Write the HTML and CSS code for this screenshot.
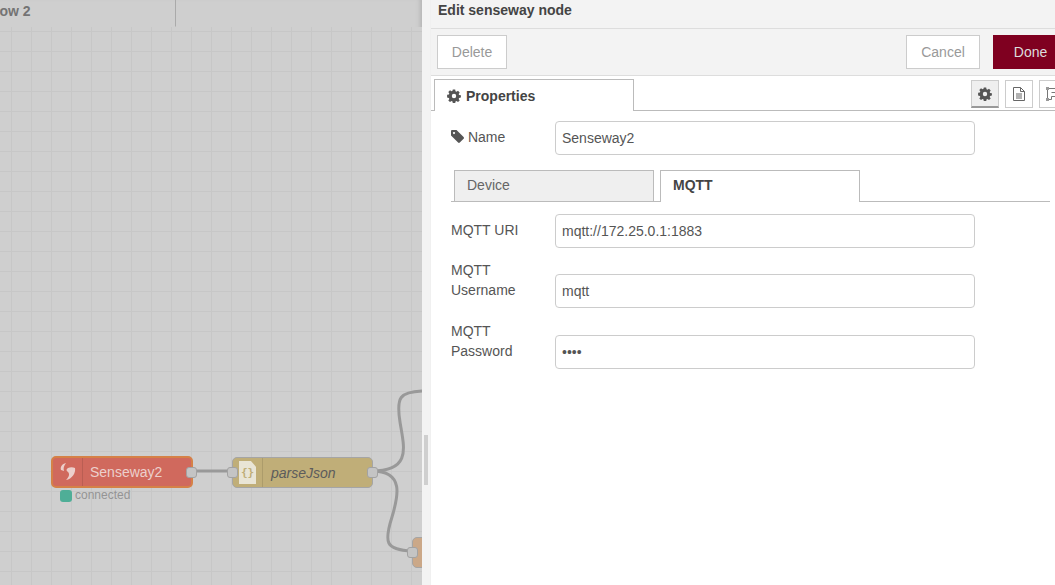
FILE: index.html
```html
<!DOCTYPE html>
<html lang="en">
<head>
<meta charset="utf-8">
<title>Edit senseway node</title>
<link rel="stylesheet" href="styles.css">
</head>
<body>
<div class="workspace">
  <div class="canvas-col">
    <div class="flow-tabs">
      <div class="flow-tab"><span class="flow-tab-label">Flow 2</span></div>
    </div>
    <div class="canvas">
      <svg class="wires" width="422" height="558" viewBox="0 0 422 558">
        <path d="M192 444 L232 444"/>
        <path d="M372 444 C412 444 404 420 400 395 C396 370 400 365 422 364"/>
        <path d="M372 444 C405 444 398 470 392 490 C384 515 385 523 412 524"/>
      </svg>
      <div class="node node-senseway">
        <span class="node-icon node-icon-red">
          <svg width="18" height="20" viewBox="0 0 18 20"><path d="M7 1 C3 2 1 5 2 8 L5 9 C4 6 5 4 7 1Z M16 6 C17 11 13 17 7 18 C10 15 11 12 9 10 C7 9 7 7 9 6 C11 5 14 5 16 6Z" fill="#eccfcb"/></svg>
        </span>
        <span class="node-label">Senseway2</span>
        <span class="port port-out"></span>
      </div>
      <div class="node-status"><span class="status-dot"></span>connected</div>
      <div class="node node-json">
        <span class="node-icon node-icon-json"><span class="json-page">{}</span></span>
        <span class="node-label">parseJson</span>
        <span class="port port-in"></span>
        <span class="port port-out"></span>
      </div>
      <div class="node node-orange"><span class="port port-in"></span></div>
    </div>
  </div>
  <div class="handle"><span class="handle-bar"></span></div>
  <div class="panel">
    <div class="panel-title">Edit senseway node</div>
    <div class="panel-actions">
      <button class="btn btn-delete">Delete</button>
      <div class="actions-right">
        <button class="btn btn-cancel">Cancel</button>
        <button class="btn btn-done">Done</button>
      </div>
    </div>
    <div class="panel-tabs">
      <div class="panel-tab">
        <svg class="gear" width="14" height="14" viewBox="0 0 14 14"><path fill-rule="evenodd" d="M5.8 0.5h2.4l.3 1.8 1 .4 1.5-1 1.7 1.7-1 1.5.4 1 1.8.3v2.4l-1.8.3-.4 1 1 1.5-1.7 1.7-1.5-1-1 .4-.3 1.8H5.8l-.3-1.8-1-.4-1.5 1-1.7-1.7 1-1.5-.4-1-1.8-.3V5.700l1.8-.3.4-1-1-1.500 1.700-1.700 1.500 1 1-.4z M7 4.800a2.200 2.200 0 1 0 0 4.400 2.200 2.200 0 0 0 0-4.400z" fill="#555"/></svg>
        Properties
      </div>
      <div class="tab-icons">
        <span class="tab-icon tab-icon-on">
          <svg class="gear" width="14" height="14" viewBox="0 0 14 14"><path fill-rule="evenodd" d="M5.8 0.5h2.4l.3 1.8 1 .4 1.5-1 1.7 1.7-1 1.5.4 1 1.8.3v2.4l-1.8.3-.4 1 1 1.5-1.7 1.7-1.5-1-1 .4-.3 1.8H5.8l-.3-1.8-1-.4-1.5 1-1.7-1.7 1-1.5-.4-1-1.8-.3V5.700l1.8-.3.4-1-1-1.500 1.700-1.700 1.500 1 1-.4z M7 4.800a2.200 2.200 0 1 0 0 4.400 2.200 2.200 0 0 0 0-4.400z" fill="#555"/></svg>
        </span>
        <span class="tab-icon">
          <svg width="12" height="14" viewBox="0 0 12 14"><path d="M.5.500h7l4 4v9h-11z M7.500.500v4h4 M3 7h6 M3 9h6 M3 11h6" fill="none" stroke="#666"/></svg>
        </span>
        <span class="tab-icon">
          <svg width="14" height="14" viewBox="0 0 14 14"><path d="M1.500 1.500h11v4h-3v4h-4v3h-4z M5.500 5.500h4" fill="none" stroke="#777"/><rect x="0" y="0" width="3" height="3" fill="#999"/><rect x="0" y="11" width="3" height="3" fill="#999"/><rect x="11" y="0" width="3" height="3" fill="#999"/></svg>
        </span>
      </div>
    </div>
    <div class="form">
      <div class="form-row form-row-name">
        <label class="form-label">
          <svg width="13" height="13" viewBox="0 0 13 13"><path d="M0 1.200C0 .5.500 0 1.200 0H5.500L12.600 7.100C13.100 7.600 13.100 8.300 12.600 8.800L8.800 12.600C8.300 13.100 7.600 13.100 7.100 12.600L0 5.500Z M3 2a1 1 0 1 0 .01 0Z" fill="#555" fill-rule="evenodd"/></svg>
          Name
        </label>
        <input class="form-input" type="text" value="Senseway2">
      </div>
      <div class="sub-tabs">
        <div class="sub-tab sub-tab-off">Device</div>
        <div class="sub-tab sub-tab-on">MQTT</div>
      </div>
      <div class="form-row form-row-uri">
        <label class="form-label">MQTT URI</label>
        <input class="form-input" type="text" value="mqtt://172.25.0.1:1883">
      </div>
      <div class="form-row form-row-user">
        <label class="form-label form-label-wrap">MQTT Username</label>
        <input class="form-input" type="text" value="mqtt">
      </div>
      <div class="form-row form-row-pass">
        <label class="form-label form-label-wrap">MQTT Password</label>
        <input class="form-input" type="password" value="mqtt">
      </div>
    </div>
  </div>
</div>
</body>
</html>
```

FILE: styles.css
```css
*{margin:0;padding:0;box-sizing:border-box;}
html,body{height:100%;overflow:hidden;}
body{font-family:"Liberation Sans",Arial,sans-serif;font-size:14px;color:#555;background:#fff;}

.workspace{display:flex;width:1055px;height:585px;}

/* left: dimmed canvas */
.canvas-col{width:422px;flex:none;background:#cfcfcf;display:flex;flex-direction:column;overflow:hidden;box-shadow:inset -5px 0 4px -3px #b4b4b4;}
.flow-tabs{height:27px;flex:none;position:relative;}
.flow-tab{width:176px;height:27px;border-right:1px solid #aaa;border-bottom:1px solid #cfcfcf;position:relative;overflow:hidden;}
.flow-tabs::after{content:"";position:absolute;left:175px;right:0;top:27px;height:1px;background:#b4b4b4;}
.flow-tab-label{position:absolute;left:-13px;top:3px;font-weight:bold;font-size:14px;color:#747474;line-height:16px;white-space:nowrap;}
.canvas{flex:1;position:relative;background-color:#cfcfcf;
    background-image:linear-gradient(#c7c7c7 1px,transparent 1px),linear-gradient(90deg,#c7c7c7 1px,transparent 1px);
    background-size:20px 20px;background-position:11px 4px;}
.wires{position:absolute;left:0;top:0;}
.wires path{fill:none;stroke:#999;stroke-width:3;}

.node{position:absolute;height:31px;border-radius:5px;border:1px solid #a5a5a5;display:flex;align-items:center;}
.node-senseway{left:51px;top:429px;width:142px;height:32px;background:#d0695d;border:2px solid #d58147;}
.node-json{left:232px;top:430px;width:141px;background:#c0ae78;}
.node-orange{left:412px;top:510px;width:30px;background:#cba888;}
.node-icon{width:30px;height:100%;flex:none;display:flex;align-items:center;justify-content:center;border-right:1px solid rgba(0,0,0,.1);}
.node-icon-json{justify-content:flex-start;padding-left:6px;}
.json-page{width:17px;height:23px;background:#e9e5d6;color:#c0ae78;font:bold 11px/23px "DejaVu Sans Mono",monospace;text-align:center;clip-path:polygon(0 0,70% 0,100% 25%,100% 100%,0 100%);}
.node-label{font-size:14px;white-space:nowrap;}
.node-senseway .node-label{color:#ecd0cc;margin-left:7px;}
.node-json .node-label{color:#5c5c5c;font-style:italic;margin-left:8px;}
.port{position:absolute;width:11px;height:11px;border-radius:3px;background:#c4c4c4;border:1px solid #a2a2a2;top:50%;margin-top:-5.5px;}
.port-out{right:-6px;}
.port-in{left:-6px;}
.node-senseway .port-out{right:-6px;}
.node-status{position:absolute;left:60px;top:462px;display:flex;align-items:center;gap:3px;font-size:12px;line-height:13px;color:#949494;}
.status-dot{width:12px;height:12px;border-radius:3px;background:#4fae97;}

/* resize handle */
.handle{width:8px;flex:none;background:#f3f3f3;position:relative;}
.handle-bar{position:absolute;left:2px;top:435px;width:4px;height:50px;background:#cfcfcf;}

/* right: edit panel */
.panel{flex:1;min-width:0;border-left:1px solid #f0f0f0;overflow:hidden;}
.panel-title{height:29px;background:#f3f3f3;border-bottom:1px solid #ddd;padding:1px 0 0 7px;font-weight:bold;font-size:14px;line-height:18px;color:#444;}
.panel-actions{height:47px;background:#f3f3f3;border-bottom:1px solid #ddd;display:flex;justify-content:space-between;padding:6px 0 0 6px;}
.actions-right{display:flex;gap:13px;margin-right:-13px;}
.btn{height:34px;font:14px "Liberation Sans",Arial,sans-serif;background:#fff;border:1px solid #ccc;color:#999;}
.btn-delete{width:70px;}
.btn-cancel{width:74px;}
.btn-done{width:75px;background:#7f0020;border:none;color:#ddd;}

.panel-tabs{height:35px;display:flex;justify-content:space-between;border-bottom:1px solid #bbb;padding:3px 0 0 3px;}
.panel-tab{width:200px;height:32px;background:#fff;border:1px solid #bbb;border-bottom:none;position:relative;display:flex;align-items:center;gap:5px;padding-left:12px;font-weight:bold;font-size:14px;color:#444;}
.tab-icons{display:flex;gap:6px;margin-right:-12px;padding-top:1px;}
.tab-icon{width:28px;height:28px;background:#fff;border:1px solid #ccc;display:flex;align-items:center;justify-content:center;}
.tab-icon-on{background:#efefef;border-bottom:2px solid #999;}

.form{padding:10px 5px 0 20px;}
.form-row{display:flex;align-items:flex-start;}
.form-label{width:104px;flex:none;font-size:14px;line-height:20px;color:#555;padding-top:6px;}
.form-label svg{vertical-align:-1px;}
.form-label-wrap{width:90px;margin-right:14px;padding-top:0;margin-top:-14px;}
.form-input{width:420px;height:34px;border:1px solid #ccc;border-radius:4px;padding:0 6px;font:14px "Liberation Sans",Arial,sans-serif;color:#555;background:#fff;outline:none;}
.form-input[type=password]{letter-spacing:0;}

.sub-tabs{display:flex;gap:6px;height:47px;margin-top:15px;border-bottom:1px solid #bbb;padding-left:3px;}
.sub-tab{width:200px;height:32px;border:1px solid #bbb;border-bottom:none;font-size:14px;line-height:29px;padding-left:12px;}
.sub-tab-off{background:#efefef;color:#666;height:31px;}
.sub-tab-on{background:#fff;color:#444;font-weight:bold;}
.sub-tabs{height:32px;}
.form-row-uri{margin-top:12px;}
.form-row-user{margin-top:26px;}
.form-row-pass{margin-top:27px;}
```
